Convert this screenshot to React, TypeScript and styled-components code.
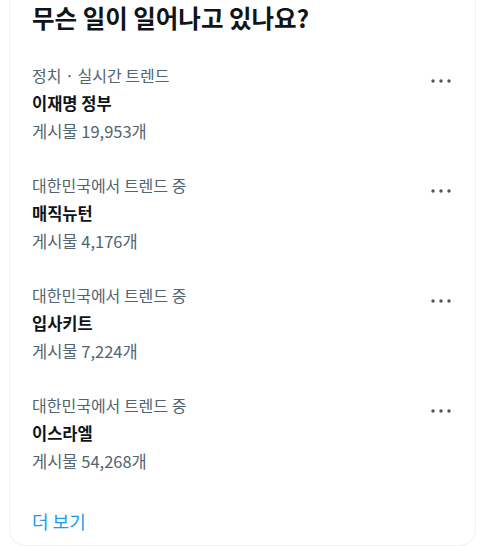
import React from "react";
import styled, { createGlobalStyle } from "styled-components";

const GlobalStyle = createGlobalStyle`
  html, body {
    margin: 0;
    padding: 0;
    background: #ffffff;
  }
  body {
    font-family: "Noto Sans CJK KR", "Noto Sans", sans-serif;
    color: #0f1419;
    -webkit-font-smoothing: antialiased;
  }
`;

const Page = styled.div`
  width: 500px;
  height: 546px;
  overflow: hidden;
  padding-left: 9px;
  box-sizing: border-box;
`;

const Card = styled.section`
  width: 467px;
  box-sizing: border-box;
  border: 1px solid #eff3f4;
  border-top: none;
  border-radius: 0 0 16px 16px;
  display: flex;
  flex-direction: column;
`;

const Title = styled.h2`
  margin: 0;
  padding: 0 22px 12px 22px;
  font-size: 24.5px;
  line-height: 36px;
  font-weight: 700;
  color: #0f1419;
`;

const Item = styled.div`
  display: flex;
  align-items: flex-start;
  justify-content: space-between;
  padding: 13px 24px 13px 22px;
`;

const Info = styled.div`
  display: flex;
  flex-direction: column;
`;

const Meta = styled.span`
  font-size: 16px;
  line-height: 28px;
  color: #536471;
  font-weight: 400;
`;

const Count = styled(Meta)`
  font-size: 16.5px;
`;

const Name = styled.span`
  font-size: 16.5px;
  line-height: 28px;
  font-weight: 700;
  color: #0f1419;
`;

const MoreButton = styled.button`
  border: none;
  background: none;
  padding: 0;
  margin-top: 10px;
  width: 20px;
  height: 20px;
  display: flex;
  align-items: center;
  justify-content: center;
  color: #4a5560;
  cursor: pointer;
`;

const ShowMore = styled.a`
  display: block;
  padding: 19px 22px 10px 22px;
  font-size: 18px;
  line-height: 28px;
  color: #1d9bf0;
  text-decoration: none;
`;

const Dots = () => (
  <svg width="20" height="6" viewBox="0 0 20 6" aria-hidden="true">
    <circle cx="2" cy="3" r="1.7" fill="currentColor" />
    <circle cx="10" cy="3" r="1.7" fill="currentColor" />
    <circle cx="18" cy="3" r="1.7" fill="currentColor" />
  </svg>
);

const trends = [
  { meta: "정치 · 실시간 트렌드", name: "이재명 정부", count: "게시물 19,953개" },
  { meta: "대한민국에서 트렌드 중", name: "매직뉴턴", count: "게시물 4,176개" },
  { meta: "대한민국에서 트렌드 중", name: "입사키트", count: "게시물 7,224개" },
  { meta: "대한민국에서 트렌드 중", name: "이스라엘", count: "게시물 54,268개" },
];

export default function App() {
  return (
    <>
      <GlobalStyle />
      <Page>
        <Card>
          <Title>무슨 일이 일어나고 있나요?</Title>
          {trends.map((t) => (
            <Item key={t.name}>
              <Info>
                <Meta>{t.meta}</Meta>
                <Name>{t.name}</Name>
                <Count>{t.count}</Count>
              </Info>
              <MoreButton aria-label="더 보기">
                <Dots />
              </MoreButton>
            </Item>
          ))}
          <ShowMore href="#">더 보기</ShowMore>
        </Card>
      </Page>
    </>
  );
}
